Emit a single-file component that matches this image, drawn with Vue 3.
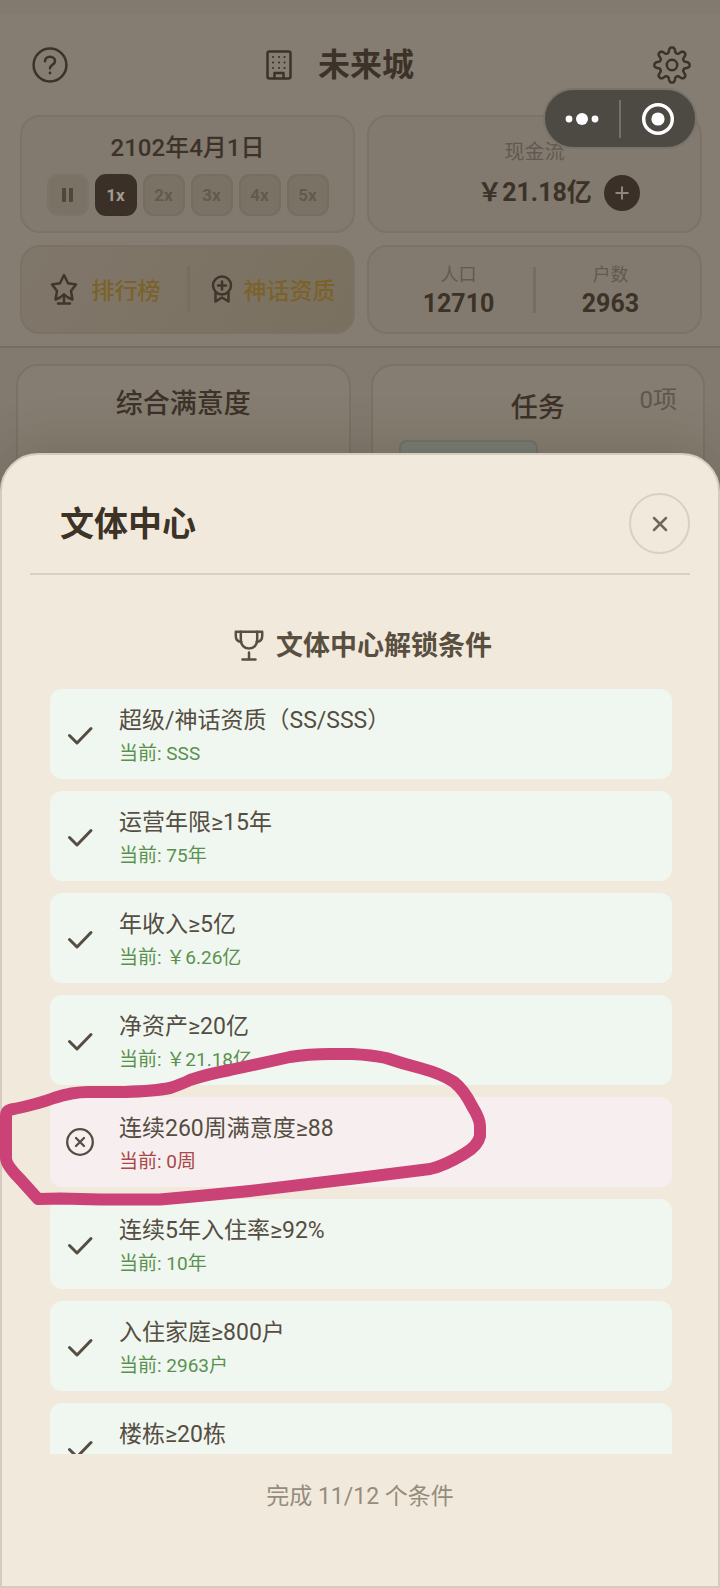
<script setup>
import { computed, ref } from 'vue'

const speeds = ['1x', '2x', '3x', '4x', '5x']
const activeSpeed = ref('1x')

const conditions = [
  { name: '超级/神话资质（SS/SSS）', current: 'SSS', met: true },
  { name: '运营年限≥15年', current: '75年', met: true },
  { name: '年收入≥5亿', current: '￥6.26亿', met: true },
  { name: '净资产≥20亿', current: '￥21.18亿', met: true },
  { name: '连续260周满意度≥88', current: '0周', met: false },
  { name: '连续5年入住率≥92%', current: '10年', met: true },
  { name: '入住家庭≥800户', current: '2963户', met: true },
  { name: '楼栋≥20栋', current: '', met: true },
]

// eight rounded teeth, sampled around the circle
const gearPath = computed(() => {
  const points = []
  for (let i = 0; i < 160; i++) {
    const a = (i / 160) * Math.PI * 2
    const r = 15 + 2.8 * Math.tanh(1.6 * Math.cos(8 * a))
    points.push(`${(20 + r * Math.sin(a)).toFixed(2)} ${(20 - r * Math.cos(a)).toFixed(2)}`)
  }
  return `M${points.join('L')}Z`
})
</script>

<template>
  <div class="app">
    <div class="city">
      <header class="topbar">
        <div class="title-row">
          <button class="icon-btn" aria-label="帮助">
            <svg width="36" height="36" viewBox="0 0 36 36" class="line">
              <circle cx="18" cy="18" r="16.4" />
              <path d="M13 14.2c0-2.6 2.2-4.4 5-4.4s5 1.9 5 4.4c0 3.6-5 3.6-5 7" />
              <circle cx="18" cy="26" r="1.4" class="dot" />
            </svg>
          </button>
          <h1 class="city-name">
            <svg width="26" height="30" viewBox="0 0 26 30" class="line">
              <rect x="1.5" y="1.5" width="23" height="27" rx="2" />
              <path d="M8.5 28v-5h9v5" />
              <path class="windows" d="M7 7h.1M13 7h.1M18.5 7h.1M7 12.5h.1M13 12.5h.1M18.5 12.5h.1M7 18h.1M13 18h.1M18.5 18h.1" />
            </svg>
            <span>未来城</span>
          </h1>
          <button class="icon-btn" aria-label="设置">
            <svg width="40" height="40" viewBox="0 0 40 40" class="line">
              <path :d="gearPath" />
              <circle cx="20" cy="20" r="5.2" />
            </svg>
          </button>
        </div>

        <div class="panels">
          <section class="panel date-panel">
            <div class="date">2102年4月1日</div>
            <div class="speeds">
              <button class="speed pause" aria-label="暂停"><i></i><i></i></button>
              <button
                v-for="s in speeds"
                :key="s"
                class="speed"
                :class="{ active: s === activeSpeed }"
                @click="activeSpeed = s"
              >{{ s }}</button>
            </div>
          </section>

          <section class="panel cash-panel">
            <div class="cash-label">现金流</div>
            <div class="cash-row">
              <strong>￥21.18亿</strong>
              <button class="add" aria-label="增加">
                <svg width="16" height="16" viewBox="0 0 16 16"><path d="M8 1.5v13M1.5 8h13" /></svg>
              </button>
            </div>
          </section>

          <section class="panel links-panel">
            <a href="#" class="gold rank">
              <svg width="28" height="32" viewBox="0 0 28 32" class="line">
                <path d="M10 24.5L5.5 26.5L7 18L2 11.5L10 10.2L14 2L18 10.2L26 11.5L21 18L22.5 26.5L18 24.5L14 21.5Z" />
                <path d="M14 21.5v8.5M8 30.5h12" />
              </svg>
              排行榜
            </a>
            <span class="rule"></span>
            <a href="#" class="gold">
              <svg width="24" height="28" viewBox="0 0 24 28" class="line">
                <circle cx="12" cy="10.5" r="9" />
                <path d="M12 6.5v8M8 10.5h8M5.5 18v8.5l6.5-4 6.5 4V18" />
              </svg>
              神话资质
            </a>
          </section>

          <section class="panel stats-panel">
            <div class="stat"><span>人口</span><strong>12710</strong></div>
            <span class="rule"></span>
            <div class="stat"><span>户数</span><strong>2963</strong></div>
          </section>
        </div>
      </header>

      <main class="cards">
        <section class="card">
          <h2>综合满意度</h2>
        </section>
        <section class="card tasks">
          <h2>任务</h2>
          <span class="count">0项</span>
          <div class="task-box"></div>
        </section>
      </main>
    </div>

    <div class="capsule">
      <button aria-label="更多">
        <svg width="34" height="34" viewBox="0 0 34 34" fill="#fff">
          <circle cx="4" cy="17" r="3.4" /><circle cx="17" cy="17" r="6" /><circle cx="30" cy="17" r="3.4" />
        </svg>
      </button>
      <span class="capsule-rule"></span>
      <button aria-label="关闭小程序">
        <svg width="34" height="34" viewBox="0 0 34 34">
          <circle cx="17" cy="17" r="14.3" fill="none" stroke="#fff" stroke-width="3.5" />
          <circle cx="17" cy="17" r="6.6" fill="#fff" />
        </svg>
      </button>
    </div>

    <div class="sheet" role="dialog" aria-labelledby="sheet-title">
      <div class="sheet-head">
        <h2 id="sheet-title">文体中心</h2>
        <button class="close" aria-label="关闭">
          <svg width="16" height="16" viewBox="0 0 16 16"><path d="M2 2l12 12M14 2L2 14" /></svg>
        </button>
      </div>

      <h3 class="unlock-title">
        <svg width="30" height="32" viewBox="0 0 30 32" class="line">
          <path d="M1.8 1.8h26.4V6c0 3.6-1.8 5.6-5.4 6M1.8 1.8V6c0 3.6 1.8 5.6 5.4 6" />
          <path d="M6.8 1.8v8c0 5 3.4 8.7 8.2 8.7s8.2-3.7 8.2-8.7v-8" />
          <path d="M15 22.5v7M8.5 29.5h13" />
        </svg>
        <span>文体中心解锁条件</span>
      </h3>

      <ul class="conditions">
        <li v-for="c in conditions" :key="c.name" class="condition" :class="{ unmet: !c.met }">
          <svg v-if="c.met" width="28" height="28" viewBox="0 0 28 28" class="line">
            <path d="M3.5 15.5l7.5 7.5L25 8.500" />
          </svg>
          <svg v-else width="28" height="28" viewBox="0 0 28 28" class="line thin">
            <circle cx="14" cy="14" r="12.8" />
            <path d="M10 10l8 8M18 10l-8 8" />
          </svg>
          <div class="text">
            <div class="name">{{ c.name }}</div>
            <div class="current"><template v-if="c.current">当前: {{ c.current }}</template></div>
          </div>
        </li>
      </ul>

      <p class="summary">完成 11/12 个条件</p>

      <!-- hand-drawn loop round the unmet condition -->
      <svg class="marker" width="490" height="175" viewBox="0 1040 490 175" aria-hidden="true">
        <path d="M38 1199L20 1179Q6 1165 6 1158V1116Q6 1110 14 1109Q38 1104 54 1098Q72 1092 88 1092H125Q155 1091 170 1088Q182 1084 190 1080Q208 1074 230 1070L290 1057Q308 1054 330 1054H352Q372 1055 386 1058Q404 1064 420 1068Q442 1074 454 1082Q464 1090 472 1106Q480 1119 480 1126V1136Q478 1146 464 1154Q444 1166 430 1169L350 1179L250 1191Q200 1196 160 1199.500H100L60 1198.500L38 1199" />
      </svg>
    </div>
  </div>
</template>

<style>
body {
  margin: 0;
  background: #82796f;
}
</style>

<style scoped>
.app {
  position: relative;
  min-height: 100vh;
  overflow: hidden;
  background: #82796f;
  color: #3c3228;
  font-family: Roboto, "Noto Sans CJK SC", sans-serif;
}

.app * { box-sizing: border-box; }

h1, h2, h3, p, ul {
  margin: 0;
  padding: 0;
}

button {
  padding: 0;
  border: 0;
  background: none;
  color: inherit;
  font-family: inherit;
  cursor: pointer;
}

svg {
  display: block;
  flex: none;
}

.line {
  fill: none;
  stroke: currentColor;
  stroke-width: 2.5;
  stroke-linecap: round;
  stroke-linejoin: round;
}

.line .dot {
  fill: currentColor;
  stroke: none;
}

.line .windows { stroke-width: 2; }

.topbar {
  margin-top: 14px;
  padding: 0 18px 12px 20px;
  border-bottom: 2px solid #766d62;
  background: #857d71;
}

.title-row {
  display: flex;
  align-items: center;
  justify-content: space-between;
  height: 101px;
  padding: 0 10px 0 12px;
}

.city-name {
  display: flex;
  align-items: center;
  gap: 26px;
  padding-right: 40px;
  font-size: 32px;
  line-height: 40px;
}

.panels {
  display: grid;
  grid-template-columns: 1fr 1fr;
  grid-template-rows: 118px 89px;
  gap: 12px;
}

.panel {
  border: 2px solid #7b7268;
  border-radius: 20px;
  background: #82796f;
}

.date-panel { padding-top: 15px; }

.date {
  font-size: 24px;
  font-weight: 500;
  line-height: 32px;
  text-align: center;
}

.speeds {
  display: flex;
  justify-content: center;
  gap: 6px;
  margin-top: 10px;
}

.speed {
  display: flex;
  align-items: center;
  justify-content: center;
  width: 42px;
  height: 42px;
  border: 2px solid #766d61;
  border-radius: 11px;
  background: #7a7265;
  color: #635a4f;
  font-size: 17px;
  font-weight: 700;
}

.speed.active {
  border-color: #3b3027;
  background: #3b3027;
  color: #a39b8f;
}

.pause {
  gap: 3px;
  border-color: #7d7469;
}

.pause i {
  width: 4px;
  height: 14px;
  border-radius: 1px;
  background: #4f463c;
}

.cash-panel { padding-top: 18px; }

.cash-label {
  color: #625a50;
  font-size: 20px;
  line-height: 34px;
  text-align: center;
}

.cash-row {
  display: flex;
  align-items: center;
  justify-content: center;
  gap: 12px;
  margin-top: 6px;
  padding-left: 48px;
}

.cash-row strong {
  font-size: 25px;
  line-height: 36px;
}

.add {
  display: grid;
  place-items: center;
  width: 36px;
  height: 36px;
  border-radius: 50%;
  background: #3b3027;
}

.add path {
  stroke: #8f877b;
  stroke-width: 2;
}

.links-panel,
.stats-panel {
  display: flex;
  align-items: center;
  justify-content: center;
}

.links-panel {
  gap: 20px;
  padding: 0 0 2px 10px;
  border-color: #7b7265;
  background: linear-gradient(120deg, #80776b, #7a705f);
}

.gold {
  display: flex;
  align-items: center;
  gap: 10px;
  color: #7b622a;
  font-size: 23px;
  font-weight: 500;
  text-decoration: none;
}

.rank {
  gap: 14px;
  padding-right: 6px;
}

.gold svg { color: #3f362c; }

.rule {
  flex: none;
  width: 3px;
  height: 46px;
  background: #776e63;
}

.stat {
  display: flex;
  flex-direction: column;
  align-items: center;
  width: 45%;
}

.stat span {
  color: #625a50;
  font-size: 18px;
  line-height: 28px;
}

.stat strong {
  font-size: 25px;
  line-height: 30px;
}

.cards {
  display: grid;
  grid-template-columns: 1fr 1fr;
  gap: 20px;
  padding: 16px 15px 0 16px;
}

.card {
  position: relative;
  min-height: 300px;
  padding: 20px 26px;
  border: 2px solid #7a7167;
  border-radius: 22px;
  background: #857d71;
}

.card h2 {
  font-size: 27px;
  font-weight: 500;
  line-height: 36px;
  text-align: center;
}

.tasks { padding-top: 24px; }

.count {
  position: absolute;
  top: 17px;
  right: 26px;
  color: #5f574d;
  font-size: 24px;
  line-height: 34px;
}

.task-box {
  width: 50%;
  height: 80px;
  margin-top: 14px;
  border: 2px solid #6e7369;
  border-radius: 8px;
  background: #797d75;
}

.capsule {
  position: absolute;
  top: 88px;
  right: 23px;
  display: flex;
  align-items: center;
  justify-content: space-evenly;
  width: 154px;
  height: 61px;
  border: 2px solid #77736a;
  border-radius: 31px;
  background: #4d4943;
}

.capsule-rule {
  width: 2px;
  height: 38px;
  background: #74706a;
}

.sheet {
  position: absolute;
  right: 0;
  bottom: 0;
  left: 0;
  padding: 0 28px;
  border: 2px solid #d5ccbf;
  border-radius: 38px 38px 0 0;
  background: #f1e9dc;
  box-shadow: 0 -8px 50px rgba(60, 50, 30, 0.2);
}

.sheet-head {
  display: flex;
  align-items: center;
  justify-content: space-between;
  padding: 38px 0 19px 30px;
  border-bottom: 2px solid #d9d0c3;
}

.sheet-head h2 {
  color: #3c3226;
  font-size: 34px;
  line-height: 44px;
}

.close {
  display: grid;
  place-items: center;
  width: 61px;
  height: 61px;
  border: 2px solid #d9d0c3;
  border-radius: 50%;
}

.close path {
  stroke: #70675a;
  stroke-width: 2.5;
  stroke-linecap: round;
}

.unlock-title {
  display: flex;
  align-items: center;
  justify-content: center;
  gap: 12px;
  margin-top: 50px;
  padding-left: 6px;
  color: #594f40;
  font-size: 27px;
  line-height: 42px;
}

.conditions {
  display: flex;
  flex-direction: column;
  gap: 12px;
  height: 765px;
  margin: 22px 18px 0 20px;
  overflow: hidden;
  list-style: none;
}

.condition {
  display: flex;
  flex: none;
  align-items: center;
  gap: 25px;
  height: 90px;
  padding: 0 16px;
  border-radius: 12px;
  background: #f0f7f0;
  color: #554d42;
}

.condition.unmet { background: #f7efef; }

.condition .line { stroke-width: 3; }

.condition .thin { stroke-width: 2.3; }

.text { padding-top: 6px; }

.name {
  font-size: 23px;
  line-height: 34px;
}

.current {
  min-height: 32px;
  color: #5a914f;
  font-size: 19px;
  line-height: 32px;
}

.unmet .current { color: #a8484a; }

.summary {
  padding: 26px 0 72px;
  color: #968c7c;
  font-size: 23px;
  line-height: 34px;
  text-align: center;
}

.marker {
  position: absolute;
  top: 585px;
  left: -2px;
  pointer-events: none;
}

.marker path {
  fill: none;
  stroke: #ca4276;
  stroke-width: 12;
  stroke-linecap: round;
  stroke-linejoin: round;
}
</style>
